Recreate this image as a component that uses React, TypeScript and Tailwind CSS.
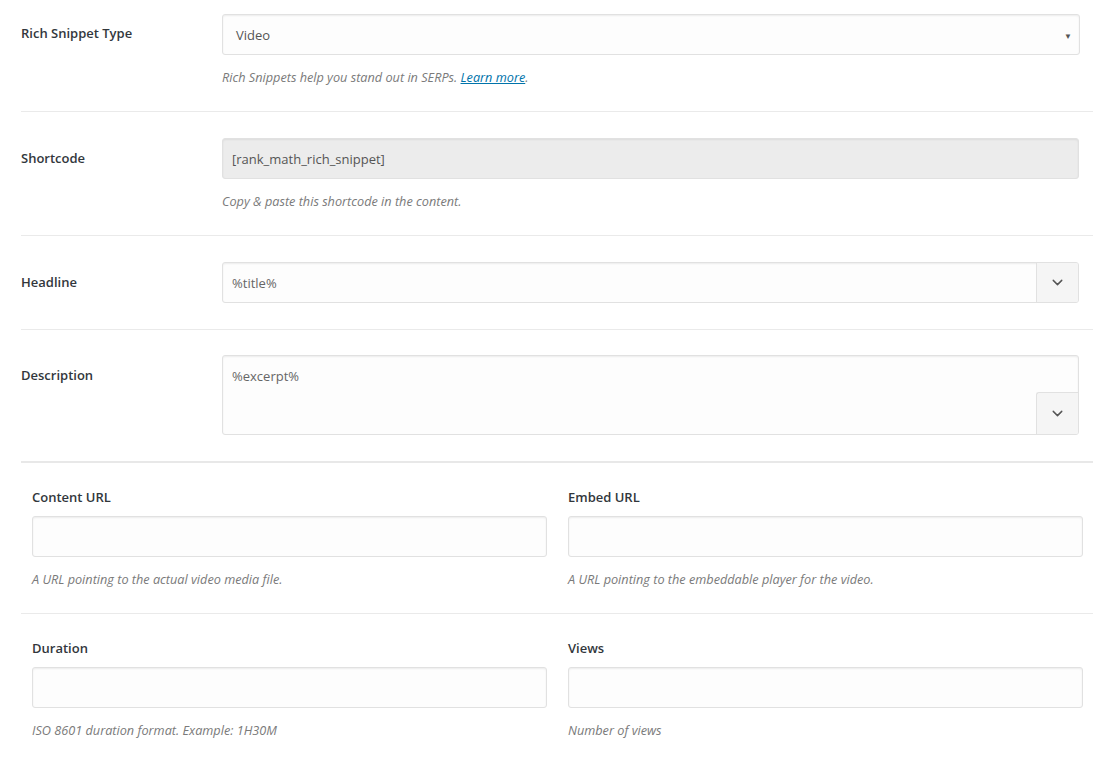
import { ChevronDown } from "lucide-react";

const box =
  "rounded-[3px] border border-[#e1e1e1] text-[13px] text-[#555] shadow-[inset_0_1px_2px_rgba(0,0,0,0.07)] outline-none";

function Row({ label, children, pb }: { label: string; children: React.ReactNode; pb: string }) {
  return (
    <div className={`flex border-b border-[#eaeaea] pt-[26px] ${pb}`}>
      <div className="w-[201px] shrink-0 pt-[10px] text-[13px] leading-[20px] font-semibold text-[#32373c]">{label}</div>
      <div className="w-[857px]">{children}</div>
    </div>
  );
}

function Desc({ children }: { children: React.ReactNode }) {
  return <p className="mt-[13px] text-[12.7px] leading-[18px] italic text-[#7a7a7a]">{children}</p>;
}

function DropBtn({ className = "" }: { className?: string }) {
  return (
    <div
      className={`flex w-[42px] items-center justify-center border-l border-[#e1e1e1] bg-[#f5f5f5] text-[#555] ${className}`}
    >
      <ChevronDown size={17} strokeWidth={2} />
    </div>
  );
}

function Field({ label, desc }: { label: string; desc: string }) {
  return (
    <div>
      <div className="text-[13px] leading-[20px] font-semibold text-[#32373c]">{label}</div>
      <input className={`${box} mt-[9px] h-[41px] w-full bg-[#fdfdfd] px-[9px]`} />
      <Desc>{desc}</Desc>
    </div>
  );
}

export default function App() {
  return (
    <div className="min-h-[763px] bg-white font-['Open_Sans',sans-serif]">
      <div className="ml-[21px] w-[1072px]">
        <div className="flex border-b border-[#eaeaea] pt-[14px] pb-[25px]">
          <div className="w-[201px] shrink-0 pt-[9px] text-[13px] leading-[20px] font-semibold text-[#32373c]">
            Rich Snippet Type
          </div>
          <div className="w-[858px]">
            <div className={`${box} flex h-[41px] items-center justify-between bg-[#fdfdfd] pt-[3px] pl-[13px] pr-[7px]`}>
              <span>Video</span>
              <span className="text-[8px] text-[#555]">▼</span>
            </div>
            <Desc>
              Rich Snippets help you stand out in SERPs.{" "}
              <a className="text-[#0073aa] underline">Learn more</a>.
            </Desc>
          </div>
        </div>

        <Row label="Shortcode" pb="pb-[25px]">
          <div className={`${box} flex h-[41px] items-center border-[#dedede] bg-[#ececec] pt-[3px] px-[9px] text-[#444]`}>
            [rank_math_rich_snippet]
          </div>
          <Desc>Copy &amp; paste this shortcode in the content.</Desc>
        </Row>

        <Row label="Headline" pb="pb-[26px]">
          <div className={`${box} flex h-[41px] items-stretch overflow-hidden bg-[#fdfdfd]`}>
            <div className="flex flex-1 items-center pt-[3px] pl-[9px] text-[#666]">%title%</div>
            <DropBtn />
          </div>
        </Row>

        <div className="flex border-b-2 border-[#e8e8e8] pt-[25px] pb-[26px]">
          <div className="w-[201px] shrink-0 pt-[10px] text-[13px] leading-[20px] font-semibold text-[#32373c]">
            Description
          </div>
          <div className="w-[857px]">
            <div className={`${box} flex h-[80px] items-stretch overflow-hidden bg-[#fdfdfd]`}>
              <div className="flex-1 pt-[11px] pl-[9px] leading-[18px] text-[#666]">%excerpt%</div>
              <div className="flex flex-col justify-end">
                <DropBtn className="h-[42px] rounded-tl-[3px] border-t" />
              </div>
            </div>
          </div>
        </div>

        <div className="grid grid-cols-2 gap-x-[21px] border-b border-[#eaeaea] pl-[11px] pr-[10px] pt-[24px] pb-[25px]">
          <Field label="Content URL" desc="A URL pointing to the actual video media file." />
          <Field label="Embed URL" desc="A URL pointing to the embeddable player for the video." />
        </div>

        <div className="grid grid-cols-2 gap-x-[21px] pl-[11px] pr-[10px] pt-[24px] pb-[25px]">
          <Field label="Duration" desc="ISO 8601 duration format. Example: 1H30M" />
          <Field label="Views" desc="Number of views" />
        </div>
      </div>
    </div>
  );
}
